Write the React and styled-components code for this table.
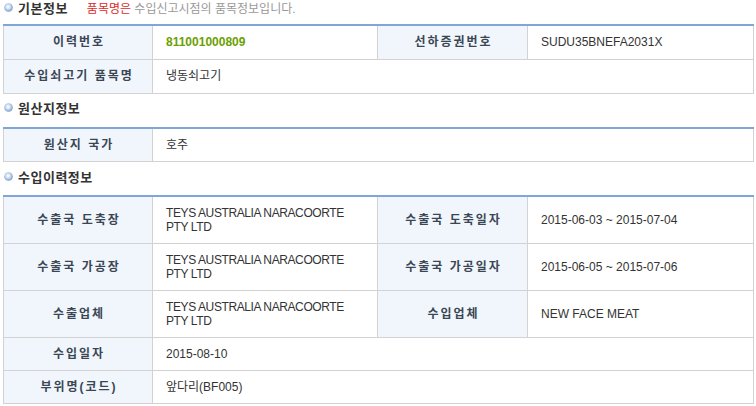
import React from 'react';
import styled, { createGlobalStyle } from 'styled-components';

const GlobalStyle = createGlobalStyle`
    body {
        margin: 0;
        background: #fff;
        font-family: "Liberation Sans", "Noto Sans CJK KR", sans-serif;
        font-size: 12px;
        color: #333;
    }
`;

const Page = styled.div`
    width: 750px;
    padding-left: 3px;
`;

const SectionTitle = styled.div`
    display: flex;
    align-items: center;
    gap: 5px;
    height: 16px;
    margin: ${(p) => (p.$first ? '-1px 0 9px' : '6px 0 11px')};
    padding-left: 1px;
`;

const TitleText = styled.h3`
    margin: 0;
    font-size: 13px;
    font-weight: 700;
    letter-spacing: 0.5px;
    color: #333;
`;

const Note = styled.span`
    margin-left: 14px;
    font-size: 12px;
    color: #999;
`;

const Red = styled.span`
    color: #e02a2a;
`;

const InfoTable = styled.table`
    width: 750px;
    border-collapse: collapse;
    table-layout: fixed;
    border-top: 2px solid #7ea6d8;
`;

const Row = styled.tr`
    height: ${(p) => (p.$tall ? 47 : p.$short ? 33 : 34)}px;
`;

const Label = styled.th`
    background: #f1f6fc;
    border: 1px solid #d2d2d2;
    border-top: none;
    padding: 0 0 0 2px;
    line-height: 14px;
    font-size: 12px;
    font-weight: 700;
    letter-spacing: 2px;
    color: #3b4654;
    text-align: center;
`;

const Value = styled.td`
    border: 1px solid #d2d2d2;
    border-top: none;
    padding: 0 13px;
    line-height: 14px;
    font-size: 12px;
    color: ${(p) => (p.$accent ? '#6aa100' : '#333')};
    font-weight: ${(p) => (p.$accent ? 700 : 400)};
`;

const Company = styled.span`
    letter-spacing: -0.4px;
`;

const Bullet = () => (
    <svg width="9" height="9" viewBox="0 0 9 9">
        <defs>
            <radialGradient id="bg" cx="0.45" cy="0.42" r="0.6">
                <stop offset="0" stopColor="#ffffff" />
                <stop offset="0.4" stopColor="#d6e3f3" />
                <stop offset="1" stopColor="#6f95c8" />
            </radialGradient>
        </defs>
        <circle cx="4.5" cy="4.5" r="4.3" fill="url(#bg)" />
    </svg>
);

const Cols = () => (
    <colgroup>
        <col style={{ width: 149 }} />
        <col style={{ width: 225 }} />
        <col style={{ width: 150 }} />
        <col style={{ width: 226 }} />
    </colgroup>
);

const CompanyName = () => (
    <Company>
        TEYS AUSTRALIA NARACOORTE
        <br />
        PTY LTD
    </Company>
);

const App = () => {
    return (
        <Page>
            <GlobalStyle />
            <SectionTitle $first>
                <Bullet />
                <TitleText>기본정보</TitleText>
                <Note><Red>품목명은</Red> 수입신고시점의 품목정보입니다.</Note>
            </SectionTitle>
            <InfoTable>
                <Cols />
                <tbody>
                    <Row>
                        <Label>이력번호</Label>
                        <Value $accent>811001000809</Value>
                        <Label>선하증권번호</Label>
                        <Value>SUDU35BNEFA2031X</Value>
                    </Row>
                    <Row>
                        <Label>수입쇠고기 품목명</Label>
                        <Value colSpan={3}>냉동쇠고기</Value>
                    </Row>
                </tbody>
            </InfoTable>

            <SectionTitle>
                <Bullet />
                <TitleText>원산지정보</TitleText>
            </SectionTitle>
            <InfoTable>
                <Cols />
                <tbody>
                    <Row>
                        <Label>원산지 국가</Label>
                        <Value colSpan={3}>호주</Value>
                    </Row>
                </tbody>
            </InfoTable>

            <SectionTitle>
                <Bullet />
                <TitleText>수입이력정보</TitleText>
            </SectionTitle>
            <InfoTable>
                <Cols />
                <tbody>
                    <Row $tall>
                        <Label>수출국 도축장</Label>
                        <Value><CompanyName /></Value>
                        <Label>수출국 도축일자</Label>
                        <Value>2015-06-03 ~ 2015-07-04</Value>
                    </Row>
                    <Row $tall>
                        <Label>수출국 가공장</Label>
                        <Value><CompanyName /></Value>
                        <Label>수출국 가공일자</Label>
                        <Value>2015-06-05 ~ 2015-07-06</Value>
                    </Row>
                    <Row $tall>
                        <Label>수출업체</Label>
                        <Value><CompanyName /></Value>
                        <Label>수입업체</Label>
                        <Value>NEW FACE MEAT</Value>
                    </Row>
                    <Row $short>
                        <Label>수입일자</Label>
                        <Value colSpan={3}>2015-08-10</Value>
                    </Row>
                    <Row $short>
                        <Label>부위명(코드)</Label>
                        <Value colSpan={3}>앞다리(BF005)</Value>
                    </Row>
                </tbody>
            </InfoTable>
        </Page>
    );
};

export default App;
